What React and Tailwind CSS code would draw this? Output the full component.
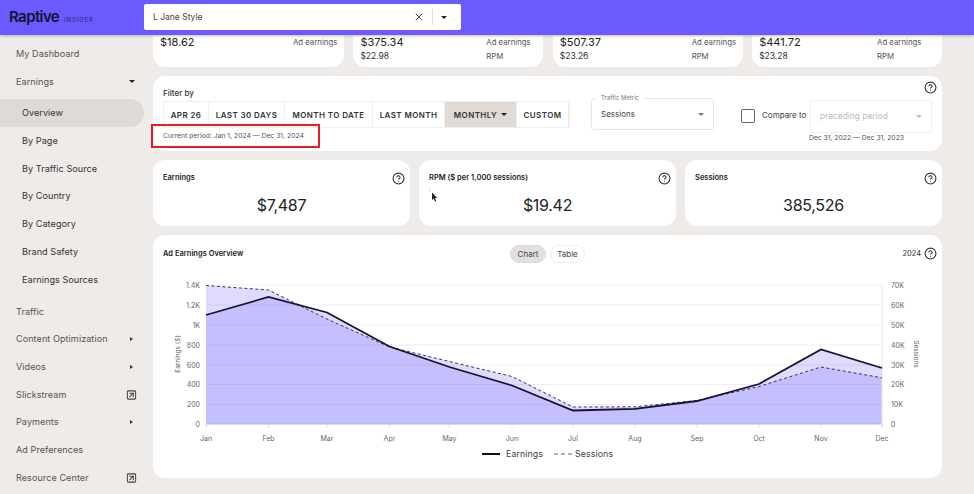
import { X, SquareArrowUpRight, CircleHelp } from 'lucide-react';

const months = ['Jan', 'Feb', 'Mar', 'Apr', 'May', 'Jun', 'Jul', 'Aug', 'Sep', 'Oct', 'Nov', 'Dec'];
const monthX = [53, 115.5, 174, 236.5, 296.5, 359, 420, 482, 544, 606, 668, 729];
const earnings = [79, 61, 76.5, 110.5, 131, 149.5, 174.5, 172.8, 165, 148, 113.5, 132];
const sessions = [49.5, 54, 83, 111, 125.5, 140.5, 171, 170.8, 164.5, 150.5, 131, 141.8];
const gridY = [49, 69, 89, 109, 129, 148.5, 168.5, 188];
const leftTicks = ['1.4K', '1.2K', '1K', '800', '600', '400', '200', '0'];
const rightTicks = ['70K', '60K', '50K', '40K', '30K', '20K', '10K', '0'];

const line = (ys) => ys.map((y, i) => `${i ? 'L' : 'M'}${monthX[i]} ${y}`).join(' ');
const area = (ys) => `${line(ys)} L729 188 L53 188 Z`;

const topCards = [
  { value: '$18.62', label: 'Ad earnings', cls: 'w-[191px] pr-[7px]' },
  { value: '$375.34', sub: '$22.98', label: 'Ad earnings', cls: 'w-[190px] pr-[13px]' },
  { value: '$507.37', sub: '$23.26', label: 'Ad earnings', cls: 'w-[190px] pr-[7px]' },
  { value: '$441.72', sub: '$23.28', label: 'Ad earnings', cls: 'w-[190px] pr-[21px]' },
];

const filters = [
  { label: 'APR 26', w: 'w-[45px]' },
  { label: 'LAST 30 DAYS', w: 'w-[76px]' },
  { label: 'MONTH TO DATE', w: 'w-[88px]' },
  { label: 'LAST MONTH', w: 'w-[72px]' },
  { label: 'MONTHLY', w: 'w-[72px]', active: true },
  { label: 'CUSTOM', w: 'w-[52px]' },
];

function Caret({ className = '' }) {
  return <span className={`inline-block w-0 h-0 border-x-[3px] border-x-transparent border-t-[3px] border-t-[#222] ${className}`} />;
}

function NavItem({ label, sub, active, right }) {
  return (
    <div className={`h-[27.7px] flex items-center justify-between mr-[9px] rounded-r-full text-[9.1px] tracking-[0.05px] ${sub ? 'pl-[22px] text-[#333]' : 'pl-4 text-[#555]'} ${active ? 'bg-[#e0dad6]' : ''}`}>
      <span>{label}</span>
      {right && <span className="w-[11px] mr-[7px] flex justify-center">{right}</span>}
    </div>
  );
}

function StatCard({ title, value, children }) {
  return (
    <div className="w-[257px] h-[66px] bg-white rounded-xl px-[10px] pt-[11px] relative">
      <div className="flex items-center justify-between h-[14px] -mr-[5px]">
        <span className="text-[7.5px] font-semibold text-[#222]">{title}</span>
        <CircleHelp size={13} className="text-[#333]" />
      </div>
      <div className="text-[16px] tracking-[-0.3px] leading-[22px] mt-[9px] text-center text-[#222]">{value}</div>
      {children}
    </div>
  );
}

export default function App() {
  const openIcon = <SquareArrowUpRight size={12} strokeWidth={2.2} className="text-[#444]" />;
  const sideCaret = <span className="inline-block w-0 h-0 border-y-[2.5px] border-y-transparent border-l-[3px] border-l-[#333]" />;

  return (
    <div className="w-[974px] h-[494px] overflow-hidden bg-[#eeebe9] font-['Inter',sans-serif] flex flex-col">
      {/* top bar */}
      <header className="h-[35px] shrink-0 bg-[#6b5afd] shadow-[0_1px_3px_rgba(0,0,0,0.25)] flex items-center z-10">
        <div className="w-[144px] pl-[9px] flex items-baseline gap-[5px]">
          <span className="text-[15px] font-semibold tracking-[-0.6px] text-[#16122e]">Raptive</span>
          <span className="text-[6px] tracking-[0.9px] text-[#2c2470]">INSIDER</span>
        </div>
        <div className="w-[317px] h-[26px] mb-[1px] bg-white rounded-[2px] flex items-center pl-[9px] text-[8.5px] text-[#444]">
          <span className="flex-1">L Jane Style</span>
          <X size={12} className="text-[#555] mr-[7px]" />
          <span className="w-px h-[16px] bg-[#ddd] mr-[8px]" />
          <Caret className="mr-[14px] border-x-[3.5px]" />
        </div>
      </header>

      <div className="flex-1 flex min-h-0">
        {/* sidebar */}
        <nav className="w-[153px] shrink-0 pt-[5px]">
          <NavItem label="My Dashboard" />
          <NavItem label="Earnings" right={<Caret />} />
          <div className="h-[4px]" />
          <NavItem label="Overview" sub active />
          <NavItem label="By Page" sub />
          <NavItem label="By Traffic Source" sub />
          <NavItem label="By Country" sub />
          <NavItem label="By Category" sub />
          <NavItem label="Brand Safety" sub />
          <NavItem label="Earnings Sources" sub />
          <div className="h-[4.5px]" />
          <NavItem label="Traffic" />
          <NavItem label="Content Optimization" right={sideCaret} />
          <NavItem label="Videos" right={sideCaret} />
          <NavItem label="Slickstream" right={openIcon} />
          <NavItem label="Payments" right={sideCaret} />
          <NavItem label="Ad Preferences" />
          <NavItem label="Resource Center" right={openIcon} />
        </nav>

        {/* main column */}
        <main className="w-[789px] flex flex-col gap-[9px]">
          <div className="flex gap-[9.5px] -mt-[3px]">
            {topCards.map((c) => (
              <div key={c.value} className={`${c.cls} h-[35px] bg-white rounded-b-xl pl-[7px] flex justify-between`}>
                <div className="pt-[4px]">
                  <div className="text-[11px] leading-[13px] text-[#222]">{c.value}</div>
                  {c.sub && <div className="text-[8.5px] leading-[11px] mt-[2px] text-[#333]">{c.sub}</div>}
                </div>
                <div className="pt-[5px] w-[44px] text-[7.8px] text-[#555] whitespace-nowrap">
                  <div className="leading-[11px]">{c.label}</div>
                  {c.sub && <div className="leading-[11px] mt-[3px]">RPM</div>}
                </div>
              </div>
            ))}
          </div>

          {/* filter bar */}
          <section className="h-[75px] bg-white rounded-xl relative pl-[10px] pt-[12px]">
            <div className="text-[8px] leading-[11px] font-medium text-[#333]">Filter by</div>
            <div className="flex items-start mt-[2px]">
              <div className="flex border border-[#eee] h-[27px]">
                {filters.map((f) => (
                  <div key={f.label} className={`${f.w} flex items-center justify-center gap-[4px] border-r border-[#eee] text-[8px] font-semibold tracking-[0.4px] text-[#333] ${f.active ? 'bg-[#e0dad6]' : ''}`}>
                    {f.label}
                    {f.active && <Caret />}
                  </div>
                ))}
              </div>
              <div className="ml-[21px] -mt-[3px] w-[123px] h-[32px] border border-[#e8e8e8] rounded-[3px] relative flex items-center justify-between pl-[9px] pr-[9px] text-[8px] text-[#444]">
                <span className="absolute -top-[5px] left-[5px] px-[4px] bg-white text-[6px] leading-[8px] text-[#777]">Traffic Metric</span>
                Sessions
                <Caret className="border-t-[#777]" />
              </div>
              <div className="ml-[27px] w-[14px] h-[14px] mt-[8px] border border-[#666] rounded-[2px]" />
              <span className="ml-[7px] mt-[9px] w-[44px] whitespace-nowrap text-[8px] leading-[11px] text-[#444]">Compare to</span>
              <div className="ml-[4px] -mt-[1px] w-[122px] h-[33px] border border-[#f0f0f0] flex items-center justify-between pl-[9px] pr-[9px] text-[8.4px] text-[#bbb]">
                preceding period
                <Caret className="border-t-[#bbb]" />
              </div>
            </div>
            <div className="flex justify-between pr-[38px]">
              <span className="text-[6.8px] leading-[10px] -mt-[2px] text-[#555]">Current period: Jan 1, 2024 — Dec 31, 2024</span>
              <span className="text-[6.8px] leading-[10px] text-[#555]">Dec 31, 2022 — Dec 31, 2023</span>
            </div>
            <CircleHelp size={13} className="absolute top-[5px] right-[5px] text-[#333]" />
            {/* annotation box drawn over the capture */}
            <div className="absolute left-[-2px] top-[48px] w-[169px] h-[23.5px] border-[2.5px] border-[#e81c24]" />
          </section>

          <div className="flex gap-[9px]">
            <StatCard title="Earnings" value="$7,487" />
            <StatCard title="RPM ($ per 1,000 sessions)" value="$19.42">
              {/* mouse pointer caught in the capture */}
              <span className="absolute left-[10px] top-[27px] w-px h-[5px] bg-[#e5e5e5]" />
              <svg width="7" height="11" viewBox="0 0 7 11" className="absolute left-[12px] top-[32px]">
                <path d="M1 0.5 L1 8 L2.7 6.4 L4 9.5 L5.2 9 L4 6 L6.3 6 Z" fill="#222" />
              </svg>
            </StatCard>
            <StatCard title="Sessions" value="385,526" />
          </div>

          {/* chart card */}
          <section className="w-[789px] h-[243px] bg-white rounded-xl relative">
            <div className="flex items-start justify-between pl-[10px] pr-[5px] pt-[12px]">
              <span className="text-[7.5px] font-semibold text-[#222] leading-[14px]">Ad Earnings Overview</span>
              <div className="absolute left-[357px] top-[10px] flex gap-[4px] text-[8px] text-[#444]">
                <span className="w-[36px] h-[18px] rounded-full bg-[#e3dfdc] border border-[#ddd] flex items-center justify-center">Chart</span>
                <span className="w-[35px] h-[18px] rounded-full border border-[#eee] flex items-center justify-center">Table</span>
              </div>
              <div className="flex items-center gap-[3px] text-[7.5px] text-[#333]">
                2024
                <CircleHelp size={13} className="text-[#333]" />
              </div>
            </div>
            <svg width="789" height="215" className="absolute left-0 top-[0.7px]">
              {gridY.slice(0, 7).map((y) => (
                <line key={y} x1="53" x2="729" y1={y} y2={y} stroke="#efeded" />
              ))}
              <path d={area(earnings)} fill="#6b5afd" fillOpacity="0.22" />
              <path d={area(sessions)} fill="#6b5afd" fillOpacity="0.22" />
              <line x1="53" x2="729" y1="188" y2="188" stroke="#b9aef5" />
              <line x1="729" x2="729" y1="49" y2="192" stroke="#e6e6e6" />
              {monthX.map((x, i) => (
                <g key={months[i]}>
                  <line x1={x} x2={x} y1="188" y2="192" stroke="#ddd" />
                  <text x={x} y="205" textAnchor="middle" fontSize="7" fill="#666">{months[i]}</text>
                </g>
              ))}
              {leftTicks.map((t, i) => (
                <text key={t} x="47" y={gridY[i] + 2.5} textAnchor="end" fontSize="7" fill="#666">{t}</text>
              ))}
              {rightTicks.map((t, i) => (
                <text key={t} x="738" y={gridY[i] + 2.5} fontSize="7" fill="#666">{t}</text>
              ))}
              <text transform="translate(27 118) rotate(-90)" textAnchor="middle" fontSize="6.5" fill="#666">Earnings ($)</text>
              <text transform="translate(761 118) rotate(90)" textAnchor="middle" fontSize="6.5" fill="#666">Sessions</text>
              <path d={line(sessions)} fill="none" stroke="#3a3550" strokeWidth="1" strokeDasharray="3 2.5" />
              <path d={line(earnings)} fill="none" stroke="#16122e" strokeWidth="1.8" />
            </svg>
            <div className="absolute left-[329px] top-[212px] flex items-center gap-[6px] text-[8.8px] tracking-[0.1px] text-[#444]">
              <span className="w-[18px] h-[2px] bg-[#111]" />
              Earnings
              <svg width="18" height="2" className="ml-[5px] -mr-[3px]">
                <line x1="0" x2="18" y1="1" y2="1" stroke="#666" strokeDasharray="4 3" />
              </svg>
              Sessions
            </div>
          </section>
        </main>
      </div>
    </div>
  );
}
